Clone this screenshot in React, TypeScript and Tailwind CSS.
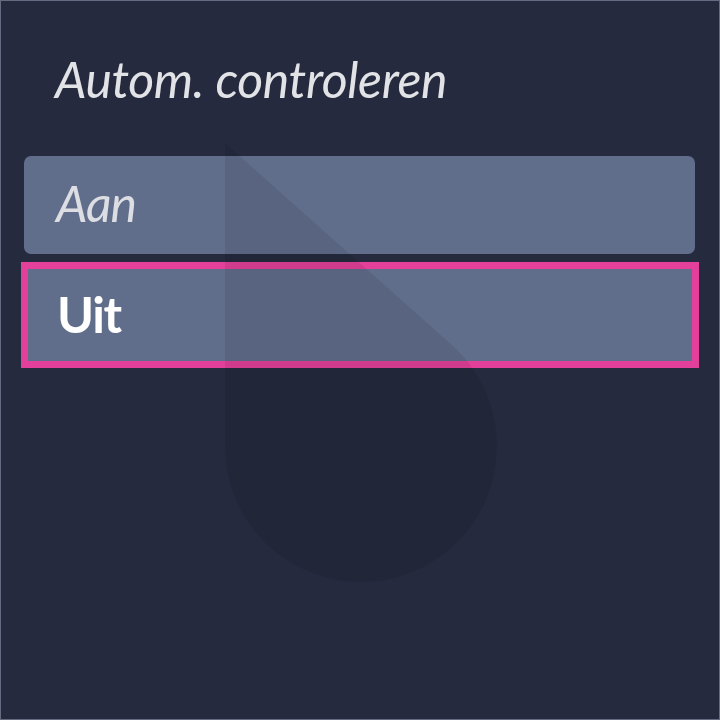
import React from "react";

export default function App() {
  return (
    <div className="relative w-[720px] h-[720px] overflow-hidden bg-[#252a3e] border border-[#656b82]" style={{ fontFamily: "Lato, 'Noto Sans', sans-serif" }}>
      <div className="pt-[48px] pl-[54px] text-[50px] leading-[60px] italic tracking-[-0.4px] text-[#e2e3e6]">
        Autom. controleren
      </div>
      <div className="mt-[47px] flex flex-col gap-[8px]">
        <div className="ml-[23px] w-[671px] h-[98px] rounded-[7px] bg-[#616e8b] pl-[32px] pt-[17px] text-[50px] leading-[60px] italic tracking-[-1px] text-[#dcdee3]">
          Aan
        </div>
        <div className="ml-[20px] w-[678px] h-[106px] border-[7px] border-[#e2409a] bg-[#616e8b] pl-[29px] pt-[15px] text-[50px] leading-[60px] font-bold tracking-[-1.5px] text-white">
          Uit
        </div>
      </div>
      <svg className="absolute left-0 top-0 pointer-events-none" width="720" height="720" viewBox="0 0 720 720">
        <path d="M224 142 L450.4 343.6 A136 136 0 1 1 224 445 Z" fill="#000" fillOpacity="0.08" />
      </svg>
    </div>
  );
}
